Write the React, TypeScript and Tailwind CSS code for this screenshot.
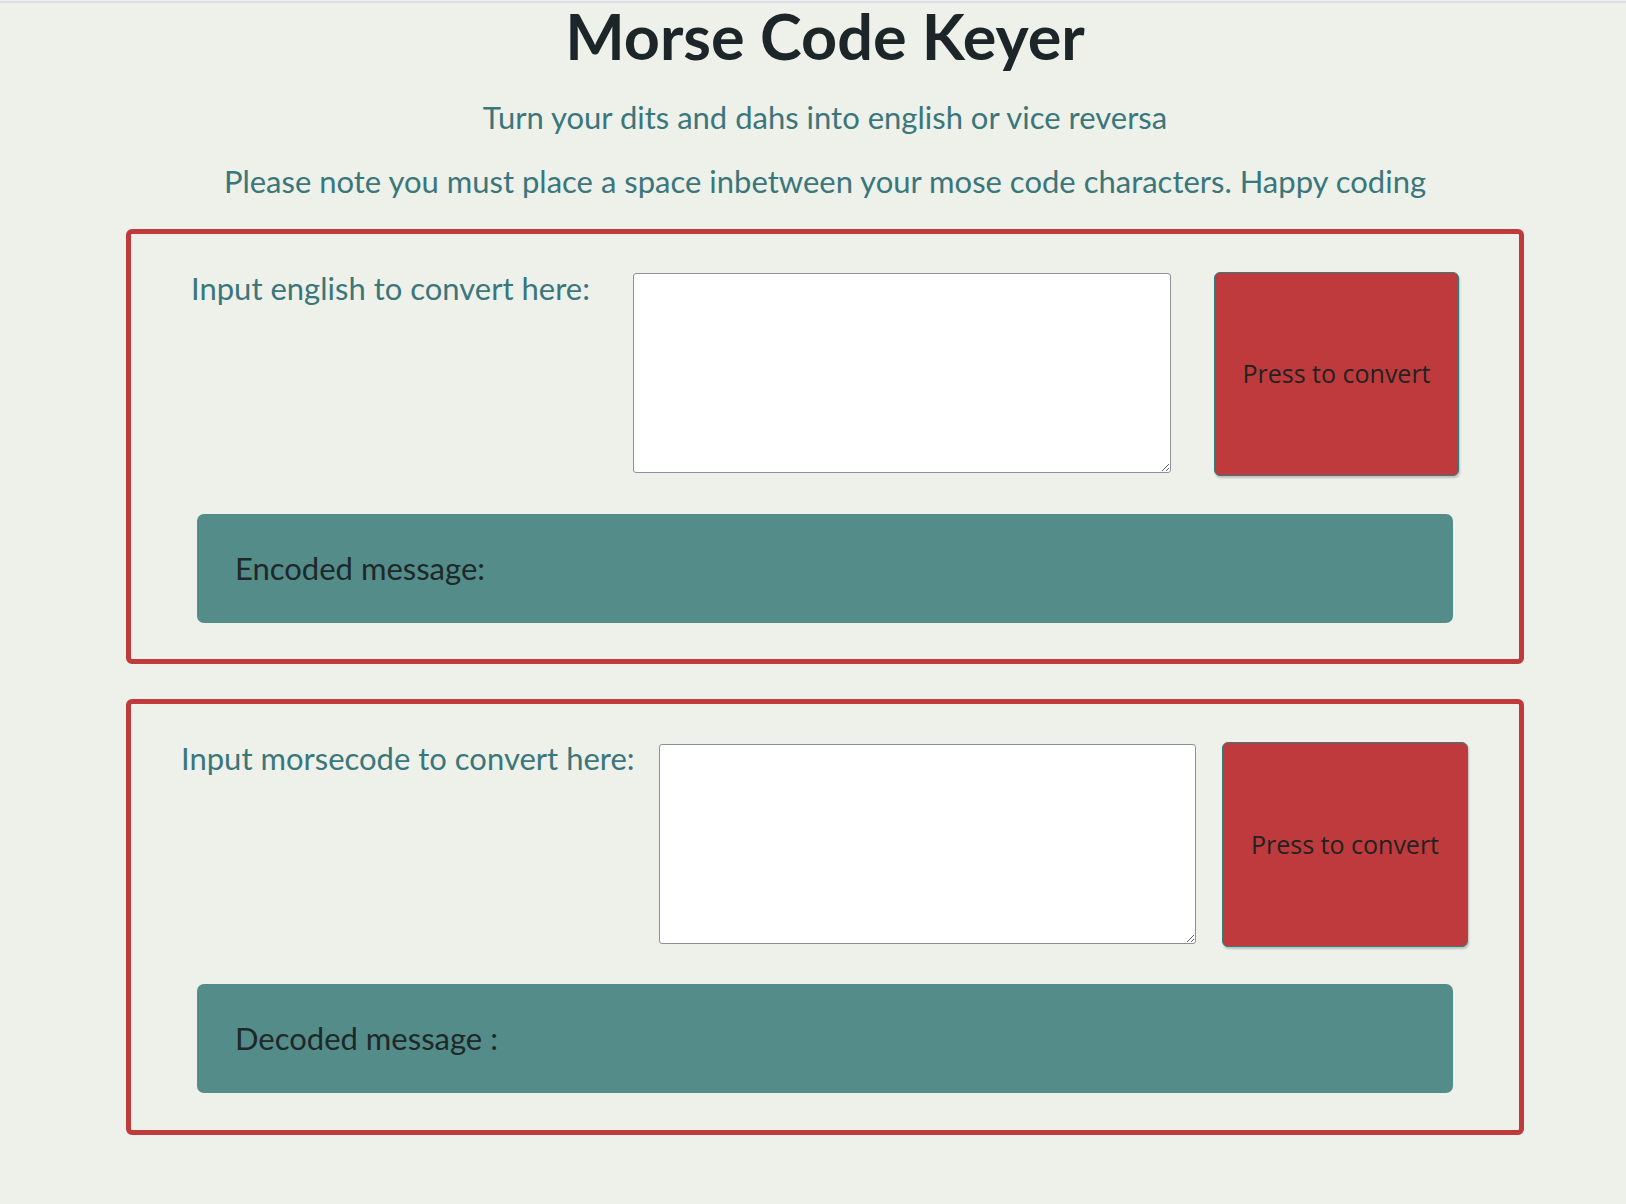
import React from "react";

const uf = { fontFamily: 'Lato, "Open Sans", sans-serif' };
const bf = { fontFamily: '"Open Sans", "Noto Sans", sans-serif' };

function Panel({
  label,
  msg,
  variant,
}: {
  label: string;
  msg: string;
  variant: 1 | 2;
}) {
  const first = variant === 1;
  return (
    <div className="mx-auto w-[1398px] rounded-[6px] border-[5px] border-[#bf3a3c]">
      <div className="flex items-start pt-[38px]">
        <div
          className={
            first
              ? "ml-[60px] w-[398px] shrink-0 pt-[1px] text-[31px] leading-[30px] text-[#3b767a] whitespace-nowrap"
              : "ml-[50px] w-[453px] shrink-0 pt-[1px] text-[31px] leading-[30px] text-[#3b767a] whitespace-nowrap"
          }
          style={uf}
        >
          {label}
        </div>
        <textarea
          className={
            first
              ? "ml-[44px] mt-[1px] h-[200px] w-[538px] shrink-0 rounded-[3px] border border-[#8f8f9d] bg-white"
              : "ml-[25px] mt-[2px] h-[200px] w-[537px] shrink-0 rounded-[3px] border border-[#8f8f9d] bg-white"
          }
        />
        <button
          className={
            first
              ? "ml-[43px] flex h-[204px] w-[245px] shrink-0 items-center justify-center rounded-[6px] border border-[#2f7d7f] bg-[#bf3a3c] text-[25px] text-[#222] shadow-[1px_2px_2px_rgba(0,0,0,0.2)]"
              : "ml-[26px] flex h-[205px] w-[246px] shrink-0 items-center justify-center rounded-[6px] border border-[#2f7d7f] bg-[#bf3a3c] text-[25px] text-[#222] shadow-[1px_2px_2px_rgba(0,0,0,0.2)]"
          }
          style={bf}
        >
          Press to convert
        </button>
      </div>
      <div
        className={
          first
            ? "mx-[66px] mt-[38px] mb-[36px] flex h-[109px] items-center rounded-[7px] bg-[#548c8a] pl-[38px] text-[31px] text-[#1e2828]"
            : "mx-[66px] mt-[37px] mb-[37px] flex h-[109px] items-center rounded-[7px] bg-[#548c8a] pl-[38px] text-[31px] text-[#1e2828]"
        }
        style={uf}
      >
        {msg}
      </div>
    </div>
  );
}

export default function App() {
  return (
    <div className="min-h-screen bg-[#edf1ea]">
      <div className="h-px bg-[#edf1ea]" />
      <div className="h-[2px] bg-[#dddce7]" />
      <div className="pl-[24px] pb-[60px]">
        <h1
          className="text-center text-[63px] font-bold leading-[66px] text-[#1c2527]"
          style={uf}
        >
          Morse Code Keyer
        </h1>
        <p
          className="mt-[30px] text-center text-[31px] leading-[36px] text-[#3b767a]"
          style={uf}
        >
          Turn your dits and dahs into english or vice reversa
        </p>
        <p
          className="mt-[28px] text-center text-[31px] leading-[36px] text-[#3b767a]"
          style={uf}
        >
          Please note you must place a space inbetween your mose code characters. Happy coding
        </p>
        <div className="mt-[30px] flex flex-col gap-[35px]">
          <Panel label="Input english to convert here:" msg="Encoded message:" variant={1} />
          <Panel label="Input morsecode to convert here:" msg="Decoded message :" variant={2} />
        </div>
      </div>
    </div>
  );
}
